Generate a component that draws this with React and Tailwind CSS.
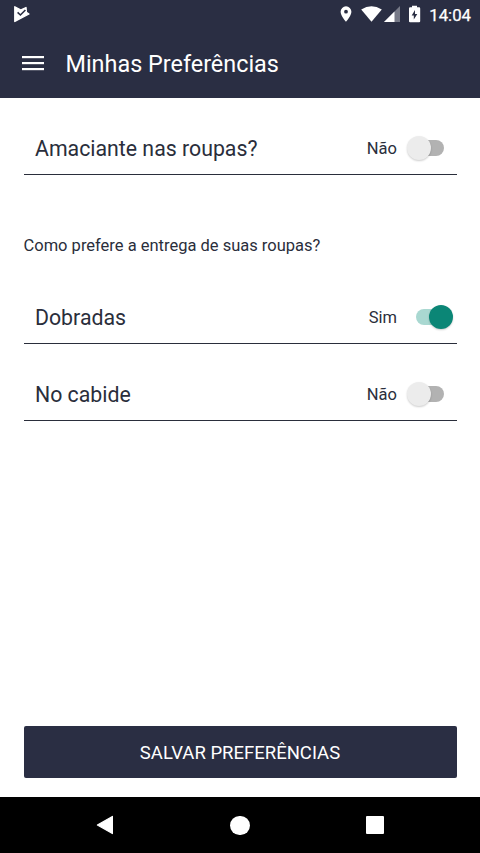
import React, { useState } from "react";

function StatusBar() {
  return (
    <div className="flex h-7 items-center pl-3 pr-[9px] text-white">
      <svg width="20" height="20" viewBox="0 0 20 20" className="mr-auto">
        <path
          d="M2.8 2.8 L9 6 L14 3.6 L14.4 8.4 L17 10 L2.8 17.4 Z"
          fill="currentColor"
          stroke="currentColor"
          strokeWidth="1.4"
          strokeLinejoin="round"
        />
        <path d="M5.6 8.4 L8.4 11 L13.4 6" fill="none" stroke="#2a2e43" strokeWidth="1.6" />
      </svg>
      <svg width="12" height="16" viewBox="0 0 12 16" className="mr-[9px]">
        <path
          fillRule="evenodd"
          fill="currentColor"
          d="M6 .3a5.4 5.4 0 0 0-5.4 5.4C.6 9.7 6 15.7 6 15.7s5.4-6 5.4-10A5.4 5.4 0 0 0 6 .3zm0 7.3a1.9 1.9 0 1 1 0-3.8 1.9 1.9 0 0 1 0 3.8z"
        />
      </svg>
      <svg width="21" height="16" viewBox="0 0 21 16" className="mr-0.5">
        <path d="M10.5 15.7 L.2 3.6 Q10.5-3.1 20.8 3.6 Z" fill="currentColor" />
      </svg>
      <svg width="16" height="16" viewBox="0 0 16 16" className="mr-2">
        <path d="M0 16 L16 0 V16 Z" fill="#767987" />
        <path d="M0 16 L10.5 5.5 V16 Z" fill="currentColor" />
      </svg>
      <svg width="13" height="18" viewBox="0 0 13 18" className="mr-2">
        <path
          fillRule="evenodd"
          fill="currentColor"
          d="M4 .8h5v1.5h2.1q1.1 0 1.1 1.1v12.8q0 1.1-1.1 1.1H2.100q-1.100 0-1.100-1.100V3.400q0-1.100 1.100-1.100H4zM7 5 3.700 10.400h2.100v4.200l3.500-5.700H7z"
        />
      </svg>
      <span className="relative top-px text-[16.8px] leading-none [-webkit-text-stroke:0.25px_white]">
        14:04
      </span>
    </div>
  );
}

function Switch({ checked }) {
  return (
    <span className="relative block h-6 w-[47px]">
      <span
        className={`absolute left-[9px] top-1 h-4 w-7 rounded-full ${
          checked ? "bg-[#a9d8d1]" : "bg-[#b2b2b2]"
        }`}
      />
      <span
        className={`absolute top-0 h-6 w-6 rounded-full shadow-[0_1px_2px_rgba(0,0,0,0.2)] ${
          checked ? "left-[22px] bg-[#0b8676]" : "left-0 bg-[#ececec]"
        }`}
      />
    </span>
  );
}

function PreferenceRow({ label, checked, onToggle }) {
  return (
    <button
      type="button"
      role="switch"
      aria-checked={checked}
      onClick={onToggle}
      className="flex h-[52px] w-full items-center border-b border-[#2a2e3b] pb-px pl-[11.5px] pr-[3px] text-left"
    >
      <span className="flex-1 pt-px text-[21.3px] leading-none">{label}</span>
      <span className="mr-[9.5px] pt-[3px] text-[16.5px] leading-none">
        {checked ? "Sim" : "Não"}
      </span>
      <Switch checked={checked} />
    </button>
  );
}

function App() {
  const [softener, setSoftener] = useState(false);
  const [folded, setFolded] = useState(true);

  return (
    <div className="flex h-screen flex-col bg-white font-[Roboto,sans-serif] text-[#2a2e3b]">
      <header className="bg-[#2a2e43] text-white">
        <StatusBar />
        <div className="flex h-[70px] items-center gap-[21.5px] pl-[22px]">
          <svg width="22" height="16" viewBox="0 0 22 16" fill="currentColor">
            <rect y="1" width="22" height="2.2" />
            <rect y="7" width="22" height="2.2" />
            <rect y="13" width="22" height="2.2" />
          </svg>
          <h1 className="pt-[3px] text-[23.4px] leading-none">Minhas Preferências</h1>
        </div>
      </header>

      <main className="flex flex-1 flex-col px-[23.5px] pb-[19px] pt-[25px]">
        <PreferenceRow
          label="Amaciante nas roupas?"
          checked={softener}
          onToggle={() => setSoftener(!softener)}
        />
        <p className="mb-9 mt-[60px] text-[16.5px] leading-[21px]">
          Como prefere a entrega de suas roupas?
        </p>
        <div className="flex flex-col gap-[25px]">
          {/* Only one delivery option can be active */}
          <PreferenceRow label="Dobradas" checked={folded} onToggle={() => setFolded(true)} />
          <PreferenceRow label="No cabide" checked={!folded} onToggle={() => setFolded(false)} />
        </div>
        <button
          type="button"
          className="mt-auto h-[52px] w-full rounded-xs bg-[#2a2e43] pt-1 text-[18.5px] text-white"
        >
          SALVAR PREFERÊNCIAS
        </button>
      </main>

      <nav className="flex h-14 items-center justify-center gap-[115px] bg-black text-white">
        <svg width="20" height="20" viewBox="0 0 20 20">
          <path
            d="M2.4 10 L17.4 1.4 V18.6 Z"
            fill="currentColor"
            stroke="currentColor"
            strokeWidth="1.2"
            strokeLinejoin="round"
          />
        </svg>
        <span className="h-[19px] w-5 rounded-full bg-white" />
        <svg width="20" height="20" viewBox="0 0 20 20">
          <rect x="1" y="1" width="18" height="18" rx="1" fill="currentColor" />
        </svg>
      </nav>
    </div>
  );
}

export default App;
